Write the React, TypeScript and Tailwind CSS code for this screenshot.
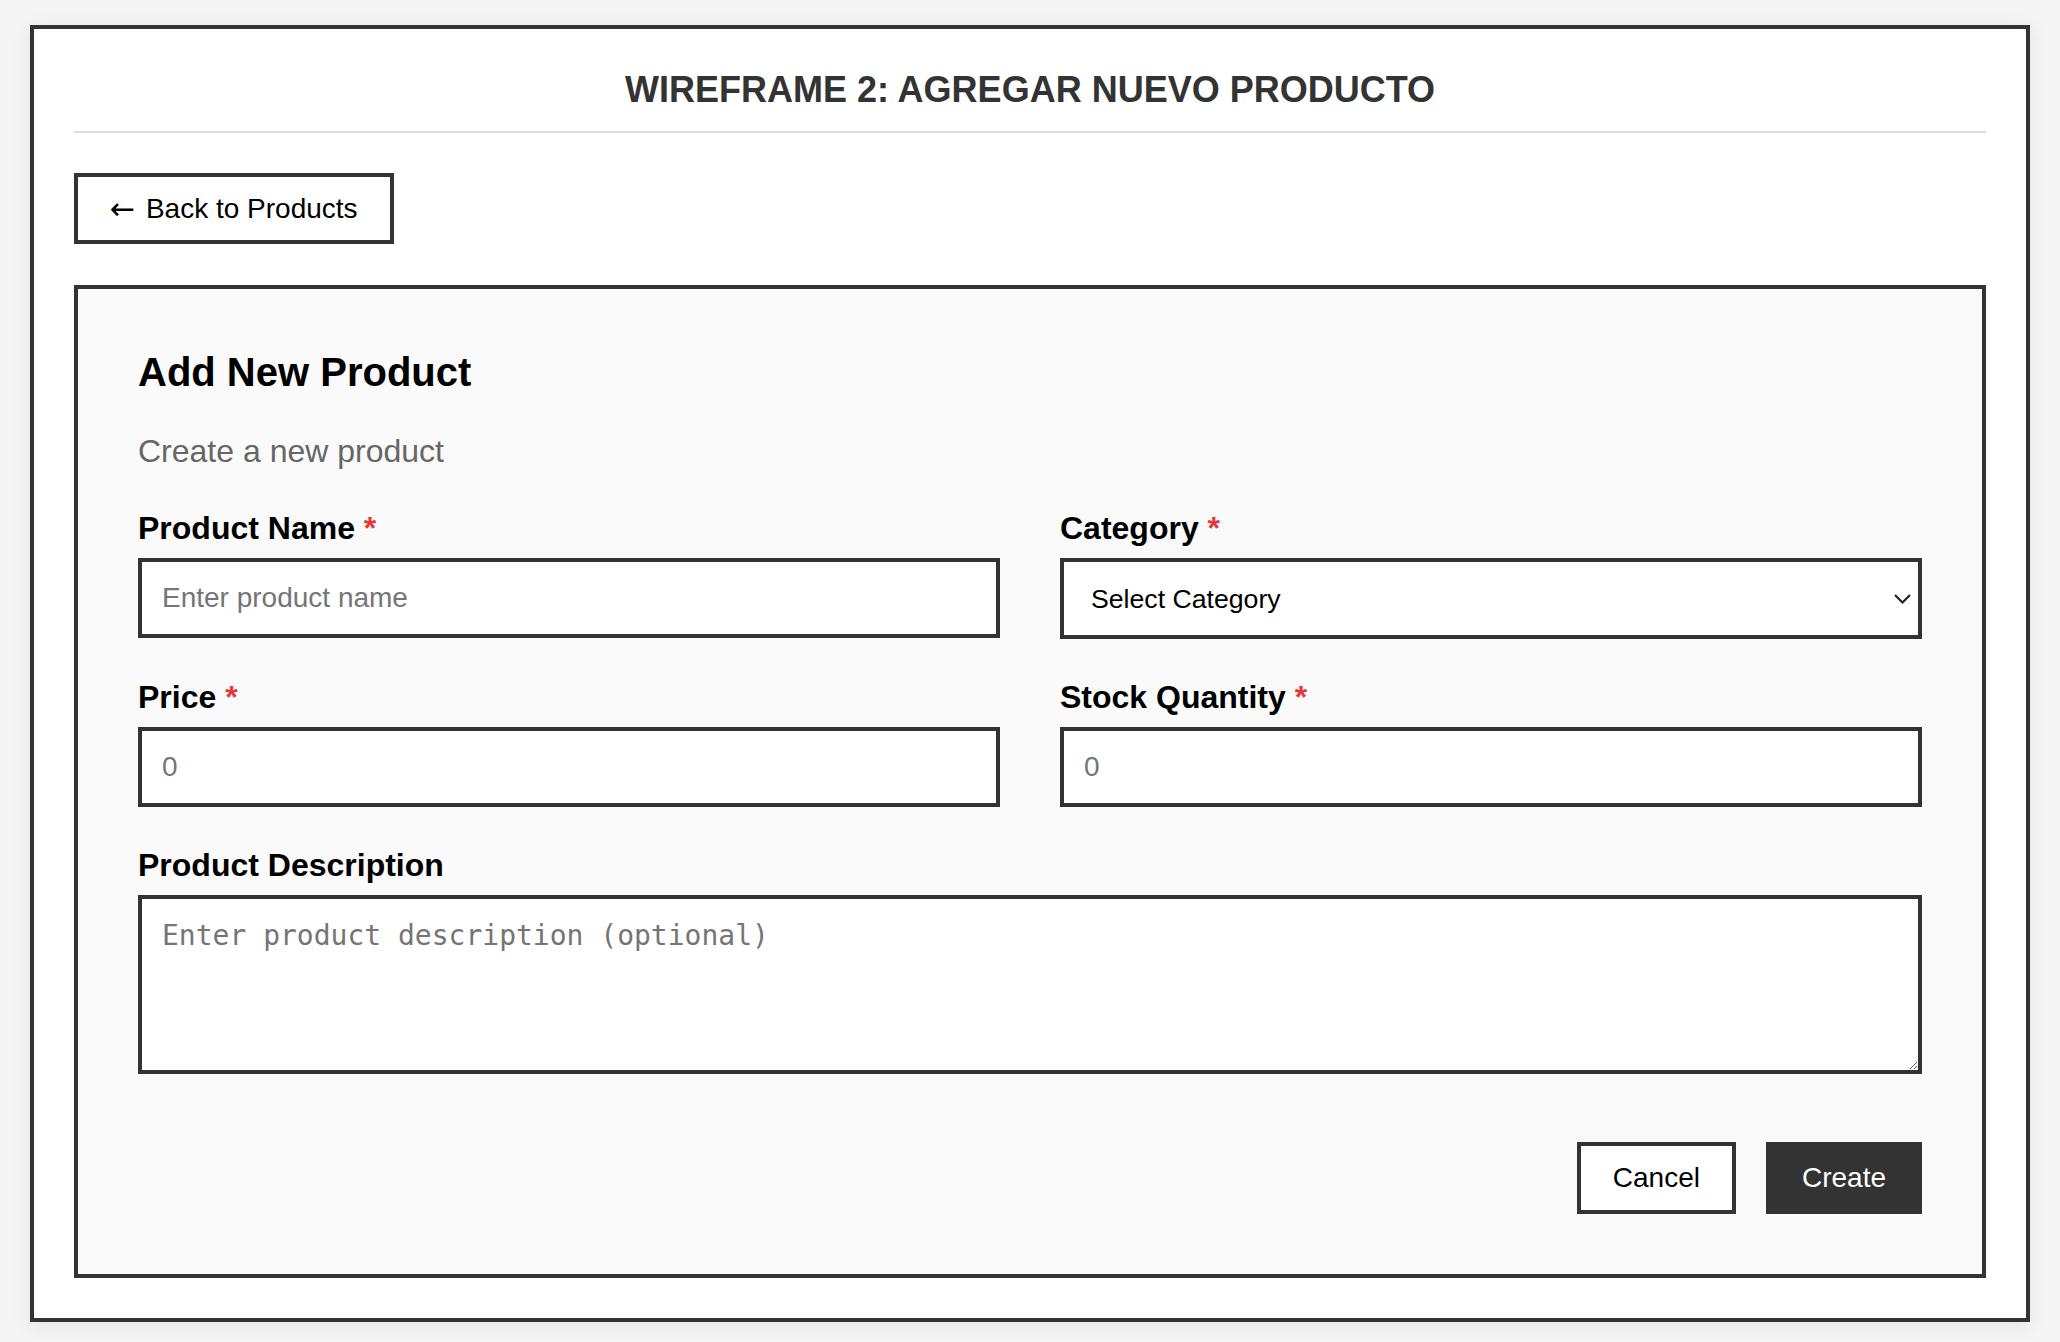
import React from 'react'

const sans = { fontFamily: '"Liberation Sans", Arial, Helvetica, sans-serif' }

function Label({ text, required }: { text: string; required?: boolean }) {
  return (
    <label className="block mb-[11px] text-[32px] font-bold leading-[37px] text-black">
      {text}
      {required && <span className="text-[#e53935]"> *</span>}
    </label>
  )
}

function TextField({ label, placeholder, required }: { label: string; placeholder: string; required?: boolean }) {
  return (
    <div>
      <Label text={label} required={required} />
      <input
        type="text"
        placeholder={placeholder}
        className="block w-full h-[80px] px-[20px] bg-white border-4 border-[#333] text-[28px] text-black placeholder:text-[#757575] outline-none"
      />
    </div>
  )
}

export default function App() {
  return (
    <div className="min-h-screen bg-[#f5f5f5] pt-[25px] pb-[20px]" style={sans}>
      <div className="w-[2000px] mx-auto bg-white border-4 border-[#333] px-[40px] pt-[40px] pb-[40px] shadow-[0_4px_20px_rgba(0,0,0,0.08)]">
        <h1 className="text-center text-[36px] font-bold leading-[41px] text-[#333] pb-[21px] border-b-2 border-[#ddd]">
          WIREFRAME 2: AGREGAR NUEVO PRODUCTO
        </h1>

        <div className="mt-[40px]">
          <button className="flex items-center bg-white border-4 border-[#333] px-[32px] py-[16px] text-[28px] leading-[31px] text-black">
            <span className="text-[30px]" style={{ fontFamily: '"DejaVu Sans", sans-serif' }}>←</span>
            <span className="ml-[3px]">&nbsp;Back to Products</span>
          </button>
        </div>

        <div className="mt-[41px] bg-[#fafafa] border-4 border-[#333] px-[60px] pt-[60px] pb-[60px]">
          <h2 className="text-[40px] font-bold leading-[46px] text-black mb-[38px]">Add New Product</h2>
          <p className="text-[32px] leading-[37px] text-[#666] mb-[40px]">Create a new product</p>

          <div className="grid grid-cols-2 gap-x-[60px] gap-y-[40px]">
            <TextField label="Product Name" placeholder="Enter product name" required />
            <div>
              <Label text="Category" required />
              <div className="relative">
                <select
                  defaultValue=""
                  className="block w-full h-[81px] pl-[27px] pr-[40px] bg-white border-4 border-[#333] text-[26.67px] text-black appearance-none outline-none rounded-none"
                  style={sans}
                >
                  <option value="">Select Category</option>
                  <option value="electronics">Electronics</option>
                  <option value="clothing">Clothing</option>
                </select>
                <svg
                  className="pointer-events-none absolute right-[11px] top-1/2 -translate-y-1/2"
                  width="17"
                  height="11"
                  viewBox="0 0 17 11"
                  fill="none"
                >
                  <polyline points="1,1.5 8.5,9 16,1.5" stroke="#222" strokeWidth="2.2" />
                </svg>
              </div>
            </div>
            <TextField label="Price" placeholder="0" required />
            <TextField label="Stock Quantity" placeholder="0" required />
          </div>

          <div className="mt-[40px]">
            <Label text="Product Description" />
            <textarea
              placeholder="Enter product description (optional)"
              className="block w-full h-[179px] p-[20px] bg-white border-4 border-[#333] text-[28px] leading-[33px] text-black placeholder:text-[#757575] outline-none"
              style={{ fontFamily: '"DejaVu Sans Mono", Menlo, monospace' }}
            />
          </div>

          <div className="mt-[68px] flex justify-end gap-[30px]">
            <button className="bg-white border-4 border-[#333] px-[32px] py-[16px] text-[28px] leading-[32px] text-black">
              Cancel
            </button>
            <button className="bg-[#333] border-4 border-[#333] px-[32px] py-[16px] text-[28px] leading-[32px] text-white">
              Create
            </button>
          </div>
        </div>
      </div>
    </div>
  )
}
